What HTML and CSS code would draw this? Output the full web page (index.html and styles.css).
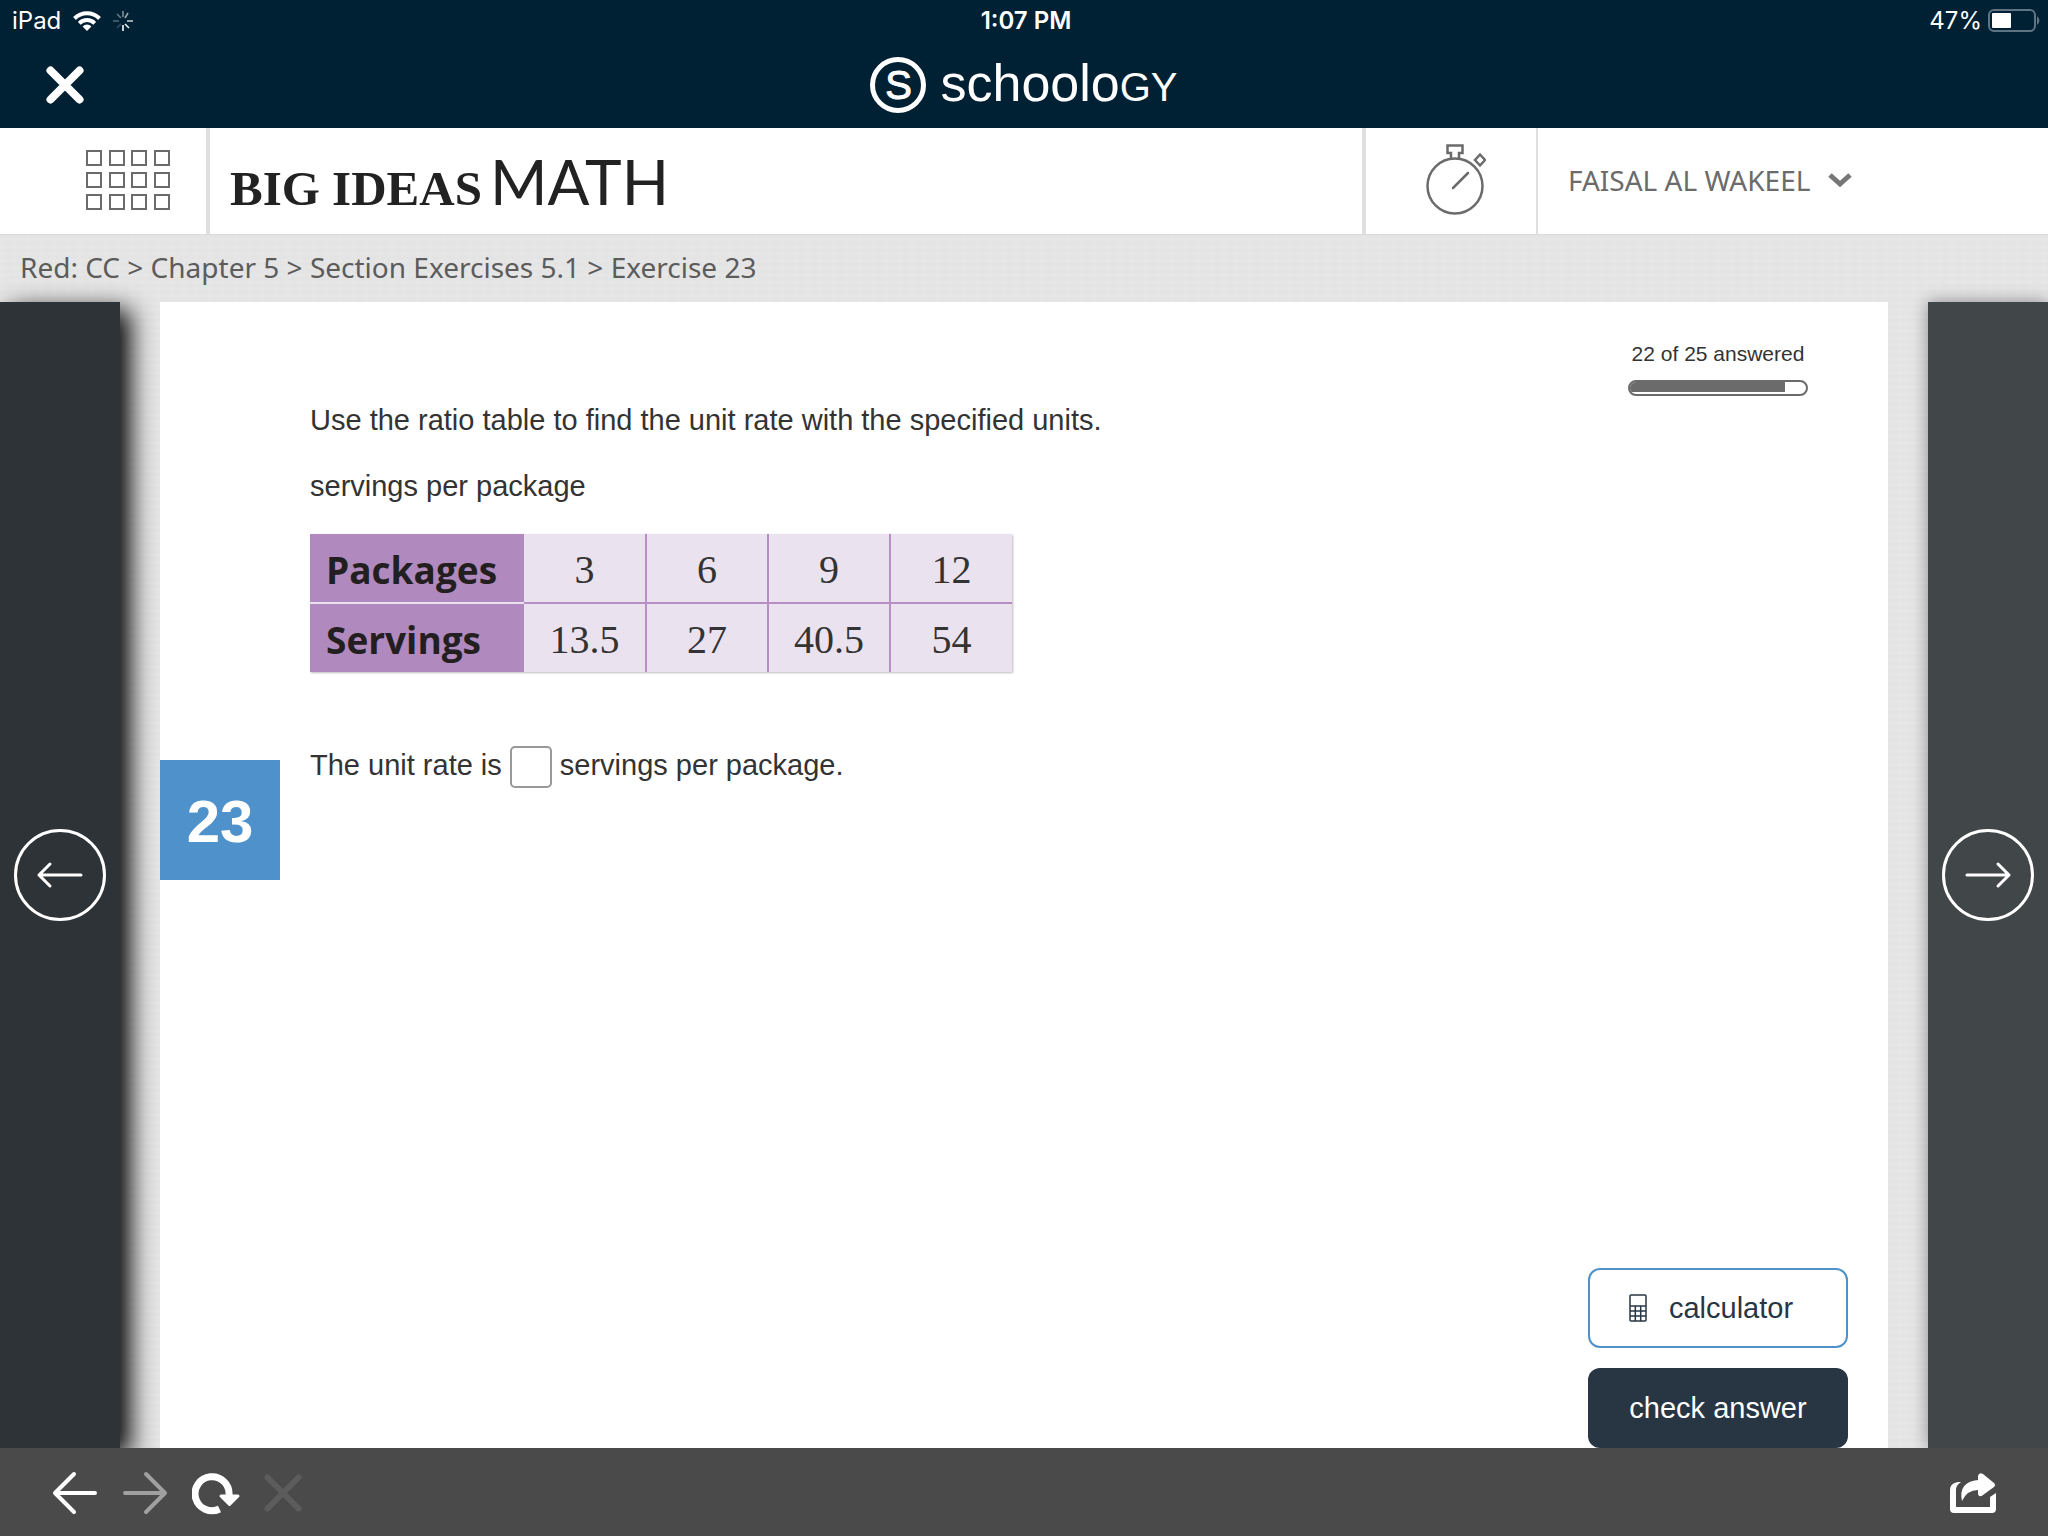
FILE: index.html
```html
<!DOCTYPE html>
<html lang="en">
<head>
    <meta charset="UTF-8">
    <meta name="viewport" content="width=device-width, initial-scale=1.0">
    <title>Exercise 23 - Big Ideas Math</title>
    <link rel="stylesheet" href="styles.css">
</head>
<body>

    <div class="status-bar">
        <div class="status-left">
            <span>iPad</span>
            <svg width="28" height="20" viewBox="0 0 28 20" fill="none" stroke="#fff" stroke-width="4">
                <path d="M1.500 7.500a17.700 17.700 0 0 1 25 0"/>
                <path d="M6.300 12.300a10.900 10.900 0 0 1 15.400 0"/>
                <path d="M14 20l-4.400-4.600a6.200 6.200 0 0 1 8.800 0z" fill="#fff" stroke="none"/>
            </svg>
            <svg width="20" height="20" viewBox="0 0 20 20" stroke="#fff" stroke-width="1.600">
                <path d="M10 0v6" opacity=".5"/>
                <path d="M15 2l-3 5" opacity=".6"/>
                <path d="M20 10h-6" opacity=".75"/>
                <path d="M16 17l-4-4" opacity=".95"/>
                <path d="M10 20v-6"/>
                <path d="M4 17l4-4" opacity=".2"/>
                <path d="M0 10h6" opacity=".3"/>
                <path d="M4 3l4 4" opacity=".4"/>
            </svg>
        </div>
        <div class="status-time">1:07 PM</div>
        <div class="status-right">
            <span>47%</span>
            <svg width="52" height="24" viewBox="0 0 52 24">
                <rect x="1" y="1" width="46" height="21" rx="5" fill="none" stroke="#5f7482" stroke-width="2"/>
                <rect x="4" y="4" width="19" height="15" rx="1" fill="#fff"/>
                <path d="M49 7q5 4.500 0 9z" fill="#5f7482"/>
            </svg>
        </div>
    </div>

    <header class="schoology-bar">
        <button class="icon-btn" aria-label="Close">
            <svg width="38" height="38" viewBox="0 0 38 38" stroke="#fff" stroke-width="8" stroke-linecap="round">
                <path d="M4.500 4.500l29 29M33.500 4.500l-29 29"/>
            </svg>
        </button>
        <div class="schoology-logo">
            <span class="logo-circle">S</span>
            <span class="logo-text">schoolo<span class="logo-caps">GY</span></span>
        </div>
    </header>

    <nav class="app-bar">
        <button class="app-grid" aria-label="Apps">
            <svg width="84" height="60" viewBox="0 0 84 60" fill="none" stroke="#6b6b6b" stroke-width="2">
                <path d="M1 1h14v14H1zM24 1h14v14H24zM46 1h14v14H46zM69 1h14v14H69z"/>
                <path d="M1 23h14v14H1zM24 23h14v14H24zM46 23h14v14H46zM69 23h14v14H69z"/>
                <path d="M1 45h14v14H1zM24 45h14v14H24zM46 45h14v14H46zM69 45h14v14H69z"/>
            </svg>
        </button>
        <a class="brand" href="#"><span class="brand-bold">BIG IDEAS</span> <span class="brand-light">MATH</span></a>
        <button class="timer" aria-label="Timer">
            <svg width="60" height="72" viewBox="0 0 60 72" fill="none" stroke="#6b6b6b" stroke-width="2.500">
                <circle cx="29" cy="42" r="27.500"/>
                <path d="M25 14V9H21.500V1.500H36.500V9H33V14"/>
                <path d="M54 10.500l5 5.500-5 5.500-5-5.500z"/>
                <path d="M27 44l15-15" stroke-linecap="round"/>
            </svg>
        </button>
        <button class="user">
            FAISAL AL WAKEEL
            <svg width="24" height="16" viewBox="0 0 24 16" fill="none" stroke="#777" stroke-width="5">
                <path d="M2 3l10 9 10-9"/>
            </svg>
        </button>
    </nav>

    <div class="breadcrumb">Red: CC &gt; Chapter 5 &gt; Section Exercises 5.1 &gt; Exercise 23</div>

    <div class="stage">
        <button class="side prev" aria-label="Previous exercise">
            <svg width="94" height="94" viewBox="0 0 94 94" fill="none" stroke="#fff" stroke-width="3" stroke-linecap="round" stroke-linejoin="round">
                <circle cx="47" cy="47" r="44.500"/>
                <path d="M68 47H26M37 36L26 47l11 11"/>
            </svg>
        </button>

        <main class="card">
            <div class="number">23</div>

            <div class="problem">
                <p>Use the ratio table to find the unit rate with the specified units.</p>
                <p>servings per package</p>
                <table class="ratio">
                    <tr>
                        <th>Packages</th>
                        <td>3</td>
                        <td>6</td>
                        <td>9</td>
                        <td>12</td>
                    </tr>
                    <tr>
                        <th>Servings</th>
                        <td>13.5</td>
                        <td>27</td>
                        <td>40.5</td>
                        <td>54</td>
                    </tr>
                </table>
                <div class="answer">
                    <label for="rate">The unit rate is</label>
                    <input type="text" id="rate">
                    <span>servings per package.</span>
                </div>
            </div>

            <div class="tools">
                <div class="progress">
                    <div>22 of 25 answered</div>
                    <div class="bar"><div class="fill" style="width:88%;"></div></div>
                </div>
                <div class="actions">
                    <button class="calculator">
                        <svg width="18" height="28" viewBox="0 0 18 28" fill="none" stroke="#283643" stroke-width="1.500">
                            <rect x="1" y="1" width="16" height="26" rx="1"/>
                            <path d="M1 12h16M1 17h16M1 22h16M6.300 12v15M11.700 12v15"/>
                        </svg>
                        calculator
                    </button>
                    <button class="check">check answer</button>
                </div>
            </div>
        </main>

        <button class="side next" aria-label="Next exercise">
            <svg width="94" height="94" viewBox="0 0 94 94" fill="none" stroke="#fff" stroke-width="3" stroke-linecap="round" stroke-linejoin="round">
                <circle cx="47" cy="47" r="44.500"/>
                <path d="M26 47H68M57 36l11 11-11 11"/>
            </svg>
        </button>
    </div>

    <footer class="toolbar">
        <button class="icon-btn" aria-label="Back">
            <svg width="46" height="44" viewBox="0 0 46 44" fill="none" stroke="#fff" stroke-width="4" stroke-linecap="round" stroke-linejoin="round">
                <path d="M43 22H3M22 3L3 22l19 19"/>
            </svg>
        </button>
        <button class="icon-btn" aria-label="Forward">
            <svg width="46" height="44" viewBox="0 0 46 44" fill="none" stroke="#a0a0a0" stroke-width="4" stroke-linecap="round" stroke-linejoin="round">
                <path d="M3 22h40M24 3l19 19-19 19"/>
            </svg>
        </button>
        <button class="icon-btn" aria-label="Reload">
            <svg width="48" height="44" viewBox="0 0 48 44" fill="none" stroke="#fff" stroke-width="7">
                <path d="M27.500 38A17 17 0 1 1 37 24"/>
                <path d="M29 25h17l-8.500 8.500z" fill="#fff" stroke-width="3" stroke-linejoin="round"/>
            </svg>
        </button>
        <button class="icon-btn" aria-label="Stop">
            <svg width="38" height="38" viewBox="0 0 38 38" stroke="#5c5c5c" stroke-width="6" stroke-linecap="round">
                <path d="M3.500 3.500l31 31M34.500 3.500l-31 31"/>
            </svg>
        </button>
        <button class="icon-btn share" aria-label="Share">
            <svg width="46" height="42" viewBox="0 0 46 42" fill="#fff">
                <path d="M11 10H8Q0 11 0 18V37Q0 41 4 41H42Q46 41 46 37V21L40 25V35H6V18Q6 13 11 10z"/>
                <path d="M12 29Q8 10 28 8V4Q29 0 33 2L44 11Q46 13 44 15L33 23Q29 26 28 22V18Q17 18 12 29z"/>
            </svg>
        </button>
    </footer>

</body>
</html>
```
FILE: styles.css
```css
* {
    margin: 0; padding: 0;
    box-sizing: border-box;
}
body {
    display: flex;
    flex-direction: column;
    min-height: 100vh;
    color: #333;
    font-family: "Liberation Sans", Arial, sans-serif;
    font-size: 29px;
    line-height: 32px;
    background-color: #e4e4e4;
    background-image:
        repeating-linear-gradient(0deg, rgba(255,255,255,0.08) 0 2px, transparent 3px 7px),
        repeating-linear-gradient(90deg, rgba(255,255,255,0.05) 0 3px, transparent 5px 13px);
}
button {
    border: none;
    background: none;
    color: inherit;
    font: inherit;
    cursor: pointer;
}
svg {
    display: block;
    flex: none;
}

/* device status */
.status-bar {
    display: grid;
    grid-template-columns: 1fr auto 1fr;
    align-items: center;
    height: 40px;
    padding: 2px 8px 0 12px;
    background: #002033;
    color: #fff;
    font-family: Inter, sans-serif;
    font-size: 24px;
}
.status-left, .status-right {
    display: flex;
    align-items: center;
    gap: 12px;
}
.status-right {
    justify-content: flex-end;
    gap: 6px;
}
.status-time { font-weight: 600; }

.icon-btn { display: block; }
.schoology-bar {
    display: grid;
    grid-template-columns: 1fr auto 1fr;
    align-items: center;
    height: 88px;
    padding: 2px 46px 0;
    background: #002033;
    color: #fff;
}
.schoology-bar .icon-btn { justify-self: start; }
.schoology-logo {
    display: flex;
    align-items: center;
    gap: 14px;
}
.logo-circle {
    width: 56px;
    height: 56px;
    border: 5px solid #fff;
    border-radius: 50%;
    font-size: 40px;
    line-height: 46px;
    text-align: center;
    -webkit-text-stroke: 1px #fff;
}
.logo-text {
    font-size: 52px;
    line-height: 56px;
}
.logo-caps { font-size: 40px; }

/* app navigation */
.app-bar {
    display: flex;
    height: 106px;
    background: #fff;
    color: #6b6b6b;
}
.app-grid {
    padding: 0 36px 2px 86px;
    border-right: 4px solid #e0e0e0;
}
.brand {
    flex: 1;
    padding-left: 20px;
    color: #222;
    line-height: 106px;
    text-decoration: none;
    white-space: nowrap;
}
.brand-bold {
    font-family: "Liberation Serif", serif;
    font-size: 49px;
    font-weight: bold;
}
.brand-light {
    font-family: Lato, sans-serif;
    font-size: 62px;
}
.timer {
    padding: 0 50px 2px 60px;
    border-left: 4px solid #e0e0e0;
    border-right: 2px solid #e0e0e0;
}
.user {
    display: flex;
    align-items: center;
    gap: 18px;
    width: 510px;
    padding: 0 0 2px 30px;
    font-family: "Noto Sans", sans-serif;
    font-size: 28px;
}
.breadcrumb {
    height: 68px;
    padding: 0 20px;
    border-top: 1px solid #dadada;
    color: #5c5c5c;
    font-family: "Noto Sans", sans-serif;
    font-size: 28px;
    line-height: 64px;
}

/* exercise */
.stage {
    display: flex;
    flex: 1;
    gap: 40px;
}
.side {
    display: flex;
    align-items: center;
    justify-content: center;
    width: 120px;
}
.prev {
    background: #2e3337;
    box-shadow: 10px 8px 24px #000;
}
.next {
    background: #414648;
    box-shadow: 0 0 16px rgba(0,0,0,0.4);
}
.card {
    display: grid;
    grid-template-columns: 120px 1fr 260px;
    flex: 1;
    padding-right: 40px;
    background: #fff;
}
.number {
    height: 120px;
    margin-top: 458px;
    background: #4f91cb;
    color: #fff;
    font-size: 60px;
    font-weight: bold;
    line-height: 124px;
    text-align: center;
}
.problem { padding: 102px 30px 0; }
.problem p { margin-bottom: 34px; }
.ratio {
    margin-top: -2px;
    border-collapse: collapse;
    background: #ebe2ef;
    box-shadow: 1px 1px 2px #bbb;
}
.ratio th, .ratio td {
    height: 69px;
    padding-top: 4px;
    text-align: center;
}
.ratio th {
    width: 214px;
    padding-left: 16px;
    background: #b08abf;
    color: #231f20;
    font-family: "Open Sans", sans-serif;
    font-size: 37px;
    text-align: left;
}
.ratio td {
    width: 122px;
    border-left: 2px solid #b78fc4;
    font-family: "Liberation Serif", serif;
    font-size: 40px;
}
.ratio th + td { border-left: none; }
.ratio tr + tr td { border-top: 2px solid #b78fc4; }
.ratio tr + tr th { border-top: 2px solid #ebe2ef; }
.answer {
    display: flex;
    gap: 8px;
    margin-top: 74px;
}
.answer label, .answer span { line-height: 38px; }
.answer input {
    width: 42px;
    height: 42px;
    border: 2px solid #999;
    border-radius: 5px;
    font: inherit;
    text-align: center;
}
.tools {
    display: flex;
    flex-direction: column;
    justify-content: space-between;
    padding-top: 36px;
}
.progress {
    width: 180px;
    margin: 0 auto;
    font-size: 21px;
    text-align: center;
    white-space: nowrap;
}
.bar {
    height: 16px;
    margin-top: 10px;
    border: 2px solid #6b6b6b;
    border-radius: 8px;
    overflow: hidden;
}
.fill {
    height: 10px;
    background: #6b6b6b;
}
.actions {
    display: flex;
    flex-direction: column;
    gap: 20px;
}
.actions button {
    height: 80px;
    border-radius: 12px;
}
.calculator {
    display: flex;
    align-items: center;
    justify-content: center;
    gap: 22px;
    padding-right: 14px;
    border: 2px solid #4f91cb;
    color: #283643;
}
.check {
    background: #283643;
    color: #fff;
}

/* browser controls */
.toolbar {
    position: relative;
    display: flex;
    align-items: center;
    gap: 24px;
    height: 88px;
    padding: 2px 52px 0;
    background: #4a4a4a;
}
.share { margin-left: auto; }
```
